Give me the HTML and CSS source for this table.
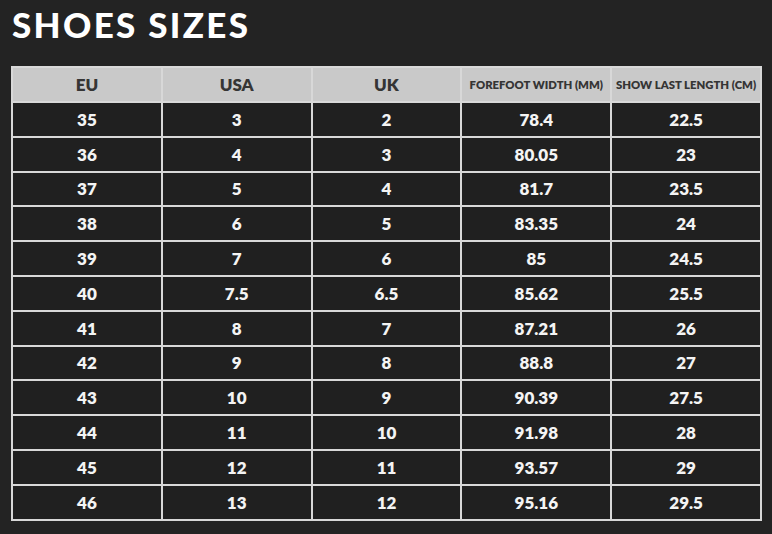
FILE: index.html
```html
<!DOCTYPE html>
<html>
<head>
<meta charset="utf-8">
<link rel="stylesheet" href="styles.css">
</head>
<body>
<div class="page">
  <h1 class="title">SHOES SIZES</h1>
  <table class="sizes">
    <thead>
      <tr><th>EU</th><th>USA</th><th>UK</th><th class="small">FOREFOOT WIDTH (MM)</th><th class="small">SHOW LAST LENGTH (CM)</th></tr>
    </thead>
    <tbody>
      <tr><td>35</td><td>3</td><td>2</td><td>78.4</td><td>22.5</td></tr>
      <tr><td>36</td><td>4</td><td>3</td><td>80.05</td><td>23</td></tr>
      <tr><td>37</td><td>5</td><td>4</td><td>81.7</td><td>23.5</td></tr>
      <tr><td>38</td><td>6</td><td>5</td><td>83.35</td><td>24</td></tr>
      <tr><td>39</td><td>7</td><td>6</td><td>85</td><td>24.5</td></tr>
      <tr><td>40</td><td>7.5</td><td>6.5</td><td>85.62</td><td>25.5</td></tr>
      <tr><td>41</td><td>8</td><td>7</td><td>87.21</td><td>26</td></tr>
      <tr><td>42</td><td>9</td><td>8</td><td>88.8</td><td>27</td></tr>
      <tr><td>43</td><td>10</td><td>9</td><td>90.39</td><td>27.5</td></tr>
      <tr><td>44</td><td>11</td><td>10</td><td>91.98</td><td>28</td></tr>
      <tr><td>45</td><td>12</td><td>11</td><td>93.57</td><td>29</td></tr>
      <tr><td>46</td><td>13</td><td>12</td><td>95.16</td><td>29.5</td></tr>
    </tbody>
  </table>
</div>
</body>
</html>
```

FILE: styles.css
```css
html, body {
  margin: 0;
  padding: 0;
  background: #232323;
}
.page {
  width: 772px;
  height: 534px;
  padding: 2px 10px 0 11px;
  box-sizing: border-box;
  font-family: "Lato", "Open Sans", sans-serif;
}
.title {
  margin: 0 0 20px 1px;
  font-size: 35px;
  line-height: 44px;
  font-weight: 900;
  color: #ffffff;
  letter-spacing: 2.3px;
}
.sizes {
  border-collapse: collapse;
  width: 751px;
  table-layout: fixed;
  border: 2px solid #d8d8d8;
}
.sizes th, .sizes td {
  border: 2px solid #d8d8d8;
  text-align: center;
  padding: 0;
  font-weight: 800;
}
.sizes th {
  background: #c9c9c9;
  color: #353535;
  height: 33px;
  font-size: 17px;
}
.sizes th.small {
  font-size: 11.3px;
  letter-spacing: 0;
  white-space: nowrap;
}
.sizes td {
  background: #202020;
  color: #f4f4f4;
  height: 32.8px;
  font-size: 17px;
}
```
